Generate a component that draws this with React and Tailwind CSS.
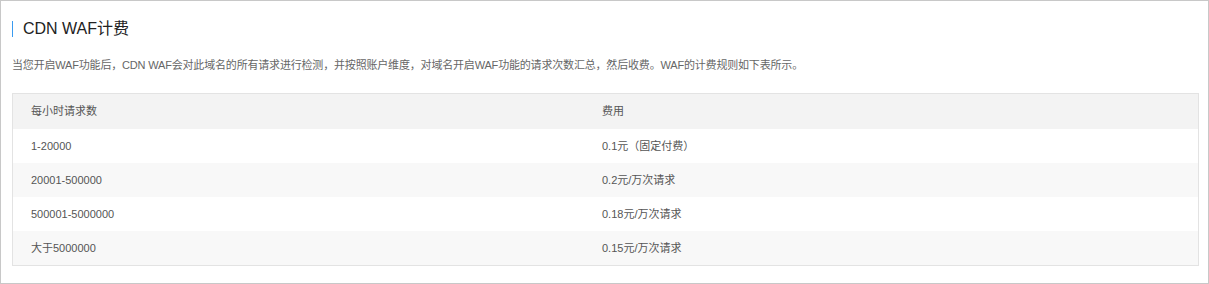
const rows = [
  { range: '1-20000', price: '0.1元（固定付费）' },
  { range: '20001-500000', price: '0.2元/万次请求' },
  { range: '500001-5000000', price: '0.18元/万次请求' },
  { range: '大于5000000', price: '0.15元/万次请求' },
]

const App = () => {
  return (
    <div className="w-[1209px] h-[284px] bg-white border border-[#c8c8c8] pl-[11px] pr-[9px] font-['Liberation_Sans','Noto_Sans_CJK_SC',sans-serif]">
      {/* Title */}
      <div className="flex items-center mt-[19px] h-[17px]">
        <span className="w-px h-[16px] bg-[#3a9bf0]"></span>
        <h2 className="ml-[10px] text-[16px] leading-none text-[#222]">CDN WAF计费</h2>
      </div>

      <p className="mt-[20px] text-[11px] leading-[16px] tracking-[-0.18px] text-[#666]">
        当您开启WAF功能后，CDN WAF会对此域名的所有请求进行检测，并按照账户维度，对域名开启WAF功能的请求次数汇总，然后收费。WAF的计费规则如下表所示。
      </p>

      {/* Pricing table */}
      <div className="mt-[20px] border border-[#e3e3e3] text-[11px] text-[#555]">
        <div className="flex items-center h-[35px] bg-[#f3f3f3]">
          <div className="w-[589px] pl-[18px]">每小时请求数</div>
          <div>费用</div>
        </div>
        {rows.map((r, i) => (
          <div
            key={r.range}
            className={`flex items-center h-[34px] ${i % 2 === 1 ? 'bg-[#f8f8f8]' : 'bg-white'}`}
          >
            <div className="w-[589px] pl-[18px]">{r.range}</div>
            <div>{r.price}</div>
          </div>
        ))}
      </div>
    </div>
  )
}

export default App
